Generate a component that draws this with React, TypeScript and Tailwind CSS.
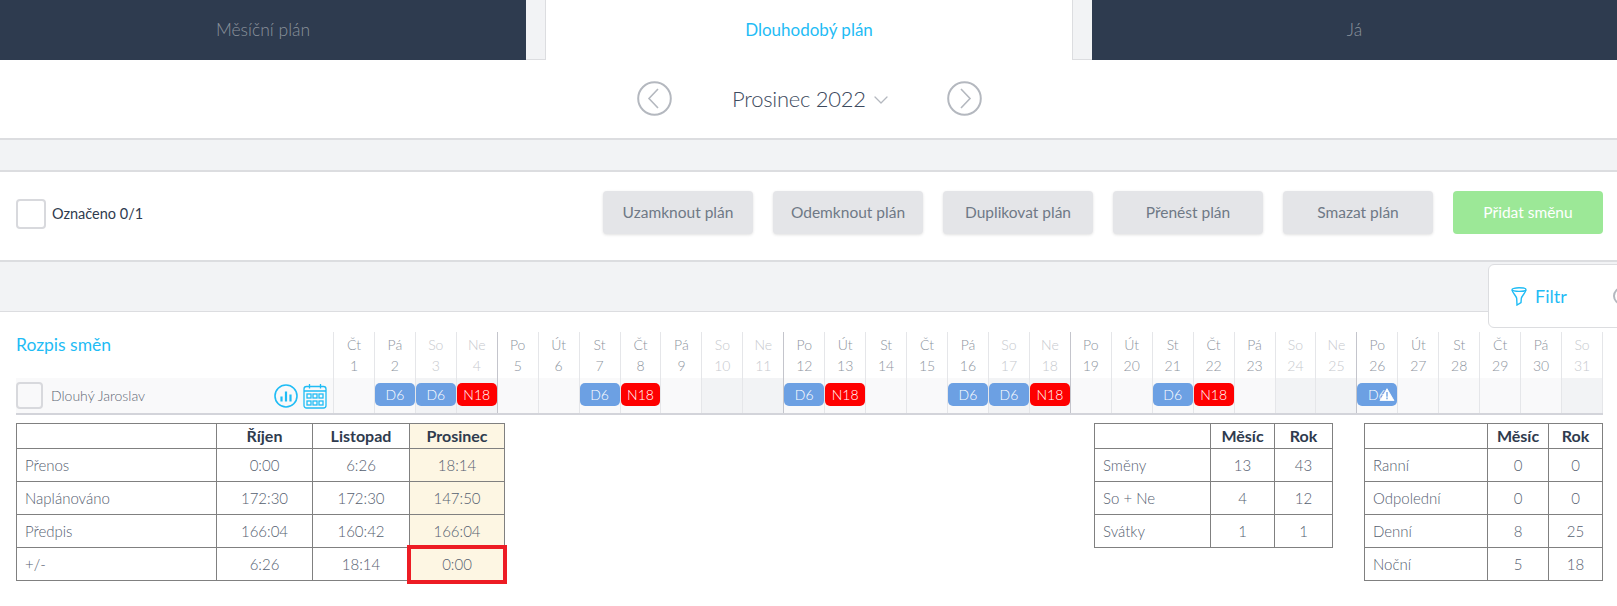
import { ChevronDown } from "lucide-react";

const dayNames = ["Čt", "Pá", "So", "Ne", "Po", "Út", "St"];
const shifts: Record<number, string> = {
  2: "D6", 3: "D6", 4: "N18", 7: "D6", 8: "N18", 12: "D6", 13: "N18",
  16: "D6", 17: "D6", 18: "N18", 21: "D6", 22: "N18", 26: "D6",
};
const days = Array.from({ length: 31 }, (_, i) => ({ day: i + 1, name: dayNames[i % 7] }));
const actions = ["Uzamknout plán", "Odemknout plán", "Duplikovat plán", "Přenést plán", "Smazat plán"];

function CircleArrow({ dir }: { dir: "left" | "right" }) {
  return (
    <svg width="35" height="35" viewBox="0 0 35 35" fill="none" stroke="#b4b8bf" strokeWidth="2">
      <circle cx="17.5" cy="17.5" r="16.3" />
      <path d={dir === "left" ? "M21 8 L12 17.5 L21 27" : "M14 8 L23 17.5 L14 27"} strokeWidth="1.6" />
    </svg>
  );
}

function StatsIcon() {
  return (
    <svg width="24" height="24" viewBox="0 0 24 24" fill="none" stroke="#1fbcf5">
      <circle cx="12" cy="12" r="11" strokeWidth="1.6" />
      <path d="M7.5 12.5v5M12 7.5v10M16.5 10.5v7" strokeWidth="2.2" />
    </svg>
  );
}

function CalendarIcon() {
  return (
    <svg width="24" height="26" viewBox="0 0 24 26" fill="none" stroke="#1fbcf5" strokeWidth="1.3">
      <rect x="1" y="3.5" width="22" height="21.5" rx="2.5" />
      <path d="M1 8h22M6.5 1v4.5M17.5 1v4.5" />
      <rect x="4" y="11" width="4" height="4" />
      <rect x="10" y="11" width="4" height="4" />
      <rect x="16" y="11" width="4" height="4" />
      <rect x="4" y="18" width="4" height="4" />
      <rect x="10" y="18" width="4" height="4" />
      <rect x="16" y="18" width="4" height="4" />
    </svg>
  );
}

function FunnelIcon() {
  return (
    <svg width="16" height="19" viewBox="0 0 16 19" fill="none" stroke="#1fbcf5" strokeWidth="1.4">
      <ellipse cx="8" cy="2.6" rx="7" ry="1.8" />
      <path d="M1 3c.5 3 4.5 6 4.7 8.500L6 18l4-2.500.3-4C10.500 9 14.500 6 15 3" />
    </svg>
  );
}

function WarningIcon() {
  return (
    <svg className="absolute right-[2px] top-[5px]" width="16" height="13" viewBox="0 0 17 15">
      <path d="M8.500 0.800 L16.500 14.500 H0.500 Z" fill="#fff" stroke="#fff" strokeLinejoin="round" />
      <path d="M8.500 4.500v5.500M8.500 11v2" stroke="#6ca0e3" strokeWidth="1.600" />
    </svg>
  );
}

function StatTable({
  head,
  rows,
  widths,
  highlight,
}: {
  head: string[];
  rows: string[][];
  widths: string[];
  highlight?: boolean;
}) {
  return (
    <table className="border-collapse table-fixed text-[15px] text-[#556070]">
      <colgroup>
        {widths.map((w) => (
          <col key={w} className={w} />
        ))}
      </colgroup>
      <thead>
        <tr className="h-[25px]">
          <th className="border border-[#808080]" />
          {head.map((h, i) => (
            <th
              key={h}
              className={`border border-[#808080] text-[16px] font-bold text-[#2f3b4e] ${
                highlight && i === head.length - 1 ? "bg-[#fdf6e3]" : ""
              }`}
            >
              {h}
            </th>
          ))}
        </tr>
      </thead>
      <tbody>
        {rows.map((row, r) => (
          <tr key={row[0]} className="h-[33px]">
            {row.map((cell, c) => {
              const isLast = c === row.length - 1;
              const boxed = highlight && isLast && r === rows.length - 1;
              return (
                <td
                  key={c}
                  className={`border border-[#808080] ${c === 0 ? "pl-[8px] text-left" : "text-center"} ${
                    highlight && isLast ? "bg-[#fdf6e3]" : ""
                  } ${boxed ? "relative" : ""}`}
                >
                  {cell}
                  {boxed && (
                    <span className="absolute -left-[3px] -right-[3px] -top-[3px] -bottom-[4px] border-4 border-[#ed1c24]" />
                  )}
                </td>
              );
            })}
          </tr>
        ))}
      </tbody>
    </table>
  );
}

export default function App() {
  return (
    <div className="relative h-screen overflow-hidden bg-white font-['Lato',sans-serif] font-light text-[#2f3b4e]">
      {/* Tabs */}
      <div className="flex h-[60px] bg-[#f2f3f5] border-b border-[#dcdde0]">
        <div className="w-[526px] h-[60px] bg-[#2e3b4f] flex items-center justify-center text-[17.5px] text-[#8b929c]">
          Měsíční plán
        </div>
        <div className="ml-[19px] w-[528px] h-[60px] bg-white border-x border-[#dcdde0] flex items-center justify-center text-[17px] font-normal text-[#1fbcf5]">
          Dlouhodobý plán
        </div>
        <div className="ml-[19px] flex-1 h-[60px] bg-[#2e3b4f] flex items-center justify-center text-[17.5px] text-[#8b929c]">
          Já
        </div>
      </div>

      {/* Month switcher */}
      <div className="h-[80px] flex items-center pl-[637px] pb-[2px] border-b-2 border-[#dcdde0]">
        <CircleArrow dir="left" />
        <span className="ml-[60px] text-[22px] tracking-[-0.25px] text-[#3d4a5e]">Prosinec 2022</span>
        <ChevronDown className="ml-[3px] mt-[3px] text-[#b4b8bf]" size={24} strokeWidth={1.3} />
        <div className="ml-[54px] flex">
          <CircleArrow dir="right" />
        </div>
      </div>

      <div className="h-[30px] bg-[#f2f3f5]" />

      {/* Actions */}
      <div className="h-[92px] border-y-2 border-[#dcdde0] flex items-center pl-[16px] pr-[14px] pb-[4px]">
        <div className="w-[30px] h-[30px] rounded-[4px] border-2 border-[#d8d9dd]" />
        <span className="ml-[6px] text-[14.5px] font-normal text-[#2f3b4e]">Označeno 0/1</span>
        <div className="ml-auto mb-[3px] flex gap-[20px]">
          {actions.map((a) => (
            <button
              key={a}
              className="w-[150px] h-[43px] rounded-[4px] bg-[#e4e5e8] shadow-[0_1px_3px_rgba(0,0,0,0.12)] text-[15.5px] font-normal text-[#6f7986]"
            >
              {a}
            </button>
          ))}
          <button className="w-[150px] h-[43px] rounded-[4px] bg-[#9ce897] text-[15.5px] font-normal text-white">
            Přidat směnu
          </button>
        </div>
      </div>

      <div className="h-[50px] bg-[#f2f3f5] border-b border-[#dcdde0]" />

      {/* Filter panel over the gray strip */}
      <div className="absolute left-[1488px] top-[264px] w-[200px] h-[64px] bg-white border border-[#dcdde0] rounded-[6px] flex items-center pl-[22px]">
        <FunnelIcon />
        <span className="ml-[8px] text-[18px] font-normal text-[#1fbcf5]">Filtr</span>
        <span className="ml-[46px] w-[18px] h-[18px] rounded-full border-2 border-[#b4b8bf]" />
      </div>

      {/* Plan header */}
      <div className="mt-[20px] flex pr-[14px]">
        <div className="w-[333px] pl-[16px] text-[17.5px] font-normal text-[#1fbcf5]">Rozpis směn</div>
        <div className="flex-1 grid grid-cols-[repeat(31,minmax(0,1fr))] border-r border-[#e5e6e9]">
          {days.map((d) => {
            const weekend = d.name === "So" || d.name === "Ne";
            return (
              <div
                key={d.day}
                className={`h-[46px] border-l text-center text-[14px] leading-[21px] pt-[2px] ${
                  d.name === "Po" ? "border-[#c4c5cc]" : "border-[#e5e6e9]"
                } ${weekend ? "text-[#c6c9ce]" : "text-[#8d949e]"}`}
              >
                <div>{d.name}</div>
                <div>{d.day}</div>
              </div>
            );
          })}
        </div>
      </div>

      {/* Employee row */}
      <div className="ml-[16px] mr-[14px] flex h-[37px] bg-[#f9f9fa] border-b-2 border-[#d3d4da]">
        <div className="w-[317px] flex items-center">
          <div className="w-[27px] h-[27px] rounded-[4px] border-2 border-[#d8d9dd]" />
          <span className="ml-[8px] text-[14px] text-[#5d6673]">Dlouhý Jaroslav</span>
          <div className="ml-auto mr-[6px] flex items-center gap-[5px]">
            <StatsIcon />
            <CalendarIcon />
          </div>
        </div>
        <div className="flex-1 grid grid-cols-[repeat(31,minmax(0,1fr))] border-r border-[#e5e6e9]">
          {days.map((d) => {
            const weekend = d.name === "So" || d.name === "Ne";
            const shift = shifts[d.day];
            return (
              <div
                key={d.day}
                className={`border-l pt-[5px] ${d.name === "Po" ? "border-[#c4c5cc]" : "border-[#e5e6e9]"} ${
                  weekend ? "bg-[#f2f3f5]" : ""
                }`}
              >
                {shift && (
                  <div
                    className={`relative h-[23px] rounded-[5px] text-center text-[14px] leading-[23px] text-white ${
                      shift === "D6" ? "bg-[#6ca0e3]" : "bg-[#fe0000]"
                    }`}
                  >
                    {shift}
                    {d.day === 26 && <WarningIcon />}
                  </div>
                )}
              </div>
            );
          })}
        </div>
      </div>

      {/* Summary tables */}
      <div className="mt-[8px] flex items-start pl-[16px] pr-[14px]">
        <StatTable
          highlight
          head={["Říjen", "Listopad", "Prosinec"]}
          widths={["w-[200px]", "w-[96px]", "w-[97px]", "w-[95px]"]}
          rows={[
            ["Přenos", "0:00", "6:26", "18:14"],
            ["Naplánováno", "172:30", "172:30", "147:50"],
            ["Předpis", "166:04", "160:42", "166:04"],
            ["+/-", "6:26", "18:14", "0:00"],
          ]}
        />
        <div className="ml-auto">
          <StatTable
            head={["Měsíc", "Rok"]}
            widths={["w-[116px]", "w-[64px]", "w-[58px]"]}
            rows={[
              ["Směny", "13", "43"],
              ["So + Ne", "4", "12"],
              ["Svátky", "1", "1"],
            ]}
          />
        </div>
        <div className="ml-[31px]">
          <StatTable
            head={["Měsíc", "Rok"]}
            widths={["w-[123px]", "w-[61px]", "w-[54px]"]}
            rows={[
              ["Ranní", "0", "0"],
              ["Odpolední", "0", "0"],
              ["Denní", "8", "25"],
              ["Noční", "5", "18"],
            ]}
          />
        </div>
      </div>
    </div>
  );
}
